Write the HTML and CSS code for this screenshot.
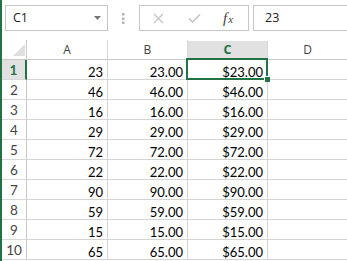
FILE: index.html
```html
<!DOCTYPE html>
<html>
<head>
<meta charset="utf-8">
<link rel="stylesheet" href="styles.css">
</head>
<body>
<div class="app">
  <div class="edge"></div>
  <div class="main">
    <div class="fbar">
      <div class="namebox">
        <span class="nb-text">C1</span>
        <svg class="nb-arrow" width="7" height="4" viewBox="0 0 7 4"><path d="M0 0H7L3.5 4Z" fill="#777"/></svg>
      </div>
      <div class="grip">
        <svg width="3" height="12" viewBox="0 0 3 12"><rect x="0" y="0" width="2.5" height="2.5" fill="#b4b4b4"/><rect x="0" y="4.5" width="2.5" height="2.5" fill="#b4b4b4"/><rect x="0" y="8.5" width="2.5" height="2.5" fill="#b4b4b4"/></svg>
      </div>
      <div class="fbtns">
        <svg class="btn-x" width="11" height="11" viewBox="0 0 11 11"><path d="M1 1L10 10M10 1L1 10" stroke="#c4c4c4" stroke-width="1.3" fill="none"/></svg>
        <svg class="btn-ok" width="13" height="10" viewBox="0 0 13 10"><path d="M1 5.5L4.5 9L12 1.5" stroke="#c4c4c4" stroke-width="1.6" fill="none"/></svg>
        <span class="fx">f<span class="fx-x">x</span></span>
      </div>
      <div class="finput">23</div>
    </div>
    <div class="grid">
      <div class="corner"><span class="tri"></span></div>
      <div class="colh">A</div>
      <div class="colh">B</div>
      <div class="colh sel">C</div>
      <div class="colh">D</div>

      <div class="rowh sel">1</div><div class="c">23</div><div class="c">23.00</div><div class="c active">$23.00<span class="selbox"><span class="handle"></span></span></div><div class="c"></div>
      <div class="rowh">2</div><div class="c">46</div><div class="c">46.00</div><div class="c">$46.00</div><div class="c"></div>
      <div class="rowh">3</div><div class="c">16</div><div class="c">16.00</div><div class="c">$16.00</div><div class="c"></div>
      <div class="rowh">4</div><div class="c">29</div><div class="c">29.00</div><div class="c">$29.00</div><div class="c"></div>
      <div class="rowh">5</div><div class="c">72</div><div class="c">72.00</div><div class="c">$72.00</div><div class="c"></div>
      <div class="rowh">6</div><div class="c">22</div><div class="c">22.00</div><div class="c">$22.00</div><div class="c"></div>
      <div class="rowh">7</div><div class="c">90</div><div class="c">90.00</div><div class="c">$90.00</div><div class="c"></div>
      <div class="rowh">8</div><div class="c">59</div><div class="c">59.00</div><div class="c">$59.00</div><div class="c"></div>
      <div class="rowh">9</div><div class="c">15</div><div class="c">15.00</div><div class="c">$15.00</div><div class="c"></div>
      <div class="rowh">10</div><div class="c">65</div><div class="c">65.00</div><div class="c">$65.00</div><div class="c"></div>
    </div>
  </div>
</div>
</body>
</html>
```

FILE: styles.css
```css
html, body {
  margin: 0;
  padding: 0;
  background: #fff;
  overflow: hidden;
}
.app {
  display: flex;
  width: 347px;
  height: 261px;
  overflow: hidden;
}
.edge {
  width: 2px;
  flex: none;
  background: #217346;
}
.main {
  flex: 1;
  min-width: 0;
  display: flex;
  flex-direction: column;
}
.fbar {
  height: 40px;
  box-sizing: border-box;
  padding: 5px 0 0 3px;
  display: flex;
  align-items: flex-start;
  font-family: "Open Sans", "Noto Sans", sans-serif;
  font-size: 12.5px;
  color: #222;
}
.namebox {
  width: 103px;
  height: 26px;
  box-sizing: border-box;
  border: 1px solid #c6c6c6;
  display: flex;
  align-items: center;
  padding-left: 7px;
  padding-right: 6px;
  flex: none;
}
.nb-text {
  flex: 1;
  line-height: 24px;
}
.nb-arrow {
  display: block;
}
.grip {
  width: 31px;
  height: 26px;
  display: flex;
  align-items: center;
  justify-content: center;
  flex: none;
}
.grip svg { display: block; margin-top: 2px; }
.fbtns {
  width: 110px;
  height: 26px;
  box-sizing: border-box;
  border: 1px solid #c6c6c6;
  display: flex;
  align-items: center;
  flex: none;
  padding-left: 13px;
}
.btn-x { display: block; margin-top: 1px; }
.btn-ok { display: block; margin-left: 24px; margin-top: -1px; }
.fx {
  margin-left: 22px;
  font-family: "Liberation Serif", "DejaVu Serif", serif;
  font-style: italic;
  font-size: 15px;
  color: #444;
  line-height: 24px;
}
.fx-x {
  font-size: 11px;
  margin-left: 1px;
}
.finput {
  flex: 1;
  height: 26px;
  box-sizing: border-box;
  border: 1px solid #c6c6c6;
  border-right: none;
  margin-left: 4px;
  padding-left: 11px;
  line-height: 24px;
}
.grid {
  display: grid;
  grid-template-columns: 25px 81px 80px 80px 80px;
  grid-auto-rows: 20px;
  font-family: "Lato", "Open Sans", sans-serif;
}
.grid > div {
  box-sizing: border-box;
  border-right: 1px solid #d4d4d4;
  border-bottom: 1px solid #d4d4d4;
}
.corner {
  position: relative;
  border-right-color: #c8c8c8 !important;
  border-bottom-color: #c8c8c8 !important;
}
.tri {
  position: absolute;
  right: 1px;
  bottom: 3px;
  width: 0;
  height: 0;
  border-left: 12px solid transparent;
  border-bottom: 12px solid #dfdfdf;
}
.colh {
  text-align: center;
  font-family: "Open Sans", "Noto Sans", sans-serif;
  font-size: 12px;
  line-height: 19px;
  color: #444;
  border-bottom-color: #c8c8c8 !important;
  border-right-color: #d8d8d8 !important;
}
.colh.sel {
  background: #e1e1e1;
  color: #217346;
  font-weight: bold;
  font-size: 12.5px;
  margin-top: 1px;
  line-height: 17px;
}
.rowh {
  text-align: center;
  font-size: 13.5px;
  line-height: 20px;
  color: #444;
  border-right-color: #c8c8c8 !important;
  border-bottom-color: #d8d8d8 !important;
}
.rowh.sel {
  background: #e1e1e1;
  color: #217346;
  font-weight: bold;
  border-right: 2px solid #217346 !important;
}
.c {
  text-align: right;
  font-size: 13px;
  line-height: 14px;
  padding: 5px 4px 0 0;
  color: #000;
  white-space: nowrap;
}
.active {
  position: relative;
}
.selbox {
  position: absolute;
  left: -2px;
  top: -2px;
  right: -1px;
  bottom: -1px;
  border: 2px solid #217346;
}
.handle {
  position: absolute;
  right: -4px;
  bottom: -4px;
  width: 5px;
  height: 5px;
  background: #217346;
  border-left: 1px solid #fff;
  border-top: 1px solid #fff;
}
```
